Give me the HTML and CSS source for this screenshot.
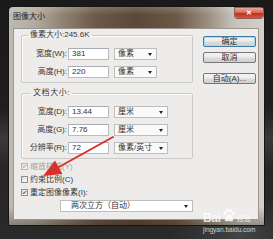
FILE: index.html
```html
<!DOCTYPE html>
<html>
<head>
<meta charset="utf-8">
<link rel="stylesheet" href="styles.css">
</head>
<body>
<div class="scene">
  <div class="window">
    <div class="titlebar">
      <span class="title">图像大小</span>
      <span class="close">✕</span>
    </div>
    <div class="client">
      <div class="main">
        <fieldset class="group">
          <legend>像素大小:245.6K</legend>
          <div class="row"><span class="lbl">宽度(W):</span><span class="input">381</span><span class="select s1">像素<i class="caret"></i></span></div>
          <div class="row"><span class="lbl">高度(H):</span><span class="input">220</span><span class="select s1">像素<i class="caret"></i></span></div>
        </fieldset>
        <fieldset class="group g2">
          <legend class="spaced">文档大小:</legend>
          <div class="row"><span class="lbl">宽度(D):</span><span class="input">13.44</span><span class="select s2">厘米<i class="caret"></i></span></div>
          <div class="row"><span class="lbl">高度(G):</span><span class="input">7.76</span><span class="select s2">厘米<i class="caret"></i></span></div>
          <div class="row"><span class="lbl">分辨率(R):</span><span class="input">72</span><span class="select s2">像素/英寸<i class="caret"></i></span></div>
        </fieldset>
        <div class="checks">
          <div class="check disabled"><span class="box on"><svg viewBox="0 0 7 7"><path d="M1.2 3.6 L2.8 5.2 L5.8 1.4"/></svg></span>缩放样式(Y)</div>
          <div class="check"><span class="box"></span>约束比例(C)</div>
          <div class="check"><span class="box on"><svg viewBox="0 0 7 7"><path d="M1.2 3.6 L2.8 5.2 L5.8 1.4"/></svg></span>重定图像像素(I):</div>
        </div>
        <span class="select wide">两次立方（自动）<i class="caret"></i></span>
      </div>
      <div class="buttons">
        <span class="btn default">确定</span>
        <span class="btn">取消</span>
        <span class="btn gap">自动(A)...</span>
      </div>
    </div>
  </div>
  <svg class="arrow" width="273" height="239" viewBox="0 0 273 239">
    <line x1="113" y1="137" x2="58" y2="167.5" stroke="#d8302c" stroke-width="2" stroke-linecap="round"/>
    <polygon points="43,176 55,160.5 62.5,174" fill="#d8302c"/>
  </svg>
  <div class="watermark">
    <div class="logo"><span class="bai">Bai</span><svg class="paw" viewBox="0 0 14 16"><ellipse cx="3" cy="6" rx="1.6" ry="2"/><ellipse cx="6" cy="3" rx="1.6" ry="2.1"/><ellipse cx="9.5" cy="3.3" rx="1.6" ry="2.1"/><ellipse cx="12" cy="6.5" rx="1.5" ry="2"/><path d="M7.5 7.5 C5 7.5 3 11 3 13 C3 15 5 15 7.5 14.5 C10 15 12 15 12 13 C12 11 10 7.5 7.5 7.5 Z"/></svg><span class="jy">经验</span></div>
    <div class="url">jingyan.baidu.com</div>
  </div>
</div>
</body>
</html>
```

FILE: styles.css
```css
html, body {
  margin: 0;
  padding: 0;
}
body {
  width: 273px;
  height: 239px;
  overflow: hidden;
  background: #1e1e1e;
  font-family: "Liberation Sans", "Noto Sans CJK SC", sans-serif;
  font-size: 8px;
  color: #363636;
}
.scene {
  position: relative;
  width: 273px;
  height: 239px;
  box-sizing: border-box;
  padding: 7px 0 0 9px;
  background:
    radial-gradient(ellipse 70px 40px at 240px 235px, #444 0%, rgba(60,60,60,0.6) 50%, rgba(40,40,40,0) 100%),
    linear-gradient(180deg, #1a1a1a 0%, #1e1e1e 45%, #3a3a3a 58%, #262626 70%, #2a2a2a 100%);
}
.window {
  width: 255px;
  height: 218px;
  box-sizing: border-box;
  padding: 0 5px 5px 4px;
  display: flex;
  flex-direction: column;
  border-radius: 4px 4px 1px 1px;
  background:
    linear-gradient(180deg, rgba(255,255,255,0.18) 0px, rgba(255,255,255,0) 8px, rgba(0,0,0,0) 200px, rgba(40,30,20,0.35) 218px),
    linear-gradient(90deg, #bfbab2 0%, #b2aba0 10%, #8e7f6e 22%, #6a5848 34%, #5a4838 50%, #6c5a48 66%, #9a8e80 78%, #c6c1b8 88%, #d3d0ca 100%);
  box-shadow: 0 0 0 1px #151515;
}
.titlebar {
  height: 21px;
  display: flex;
  justify-content: space-between;
  align-items: flex-start;
}
.title {
  margin-top: 5px;
  line-height: 10px;
  font-size: 8px;
  color: #2a241e;
}
.close {
  width: 28px;
  height: 10px;
  margin-top: 1px;
  margin-right: -4px;
  border-radius: 0 0 3px 3px;
  background: linear-gradient(180deg, #e8a89a 0%, #d66a58 45%, #c2301e 55%, #d8553e 100%);
  box-shadow: 0 0 0 1px rgba(90,30,20,0.6);
  color: #fff;
  font-size: 7px;
  font-weight: bold;
  line-height: 10px;
  text-align: center;
}
.client {
  flex: 1;
  display: flex;
  gap: 10px;
  padding: 2px 3px 0 8px;
  background: #edecea;
  box-shadow: inset 0 0 0 1px #9c968e;
}
.main {
  width: 172px;
  display: flex;
  flex-direction: column;
}
.group {
  margin: 0;
  padding: 8px 0 4px 0;
  border: 1px solid #c9c9c7;
  border-radius: 2px;
  box-shadow: inset 1px 1px 0 #fbfbfb;
  display: flex;
  flex-direction: column;
  gap: 6px;
}
.g2 {
  margin-top: 5px;
}
legend {
  margin-left: 6px;
  padding: 0 2px;
  line-height: 10px;
  font-size: 8px;
  color: #363636;
}
.spaced {
  margin-left: 9px;
  letter-spacing: 0.6px;
}
.row {
  display: flex;
  height: 12px;
  align-items: stretch;
}
.lbl {
  width: 45px;
  text-align: right;
  line-height: 12px;
}
.input {
  margin-left: 1px;
  width: 41px;
  box-sizing: border-box;
  border: 1px solid #b9bcc2;
  border-top-color: #a9acb2;
  background: #fff;
  padding-left: 3px;
  line-height: 10px;
  color: #333;
}
.select {
  position: relative;
  margin-left: 5px;
  box-sizing: border-box;
  border: 1px solid #bdbdbd;
  background: #fafafa;
  padding-left: 3px;
  line-height: 10px;
  color: #333;
}
.s1 { width: 43px; }
.s2 { width: 54px; }
.caret {
  position: absolute;
  right: 4px;
  top: 4px;
  width: 0;
  height: 0;
  border-left: 2.5px solid transparent;
  border-right: 2.5px solid transparent;
  border-top: 3px solid #222;
}
.checks {
  margin-top: 1px;
  display: flex;
  flex-direction: column;
}
.check {
  height: 13px;
  display: flex;
  align-items: center;
  gap: 2px;
  line-height: 13px;
}
.box {
  width: 7px;
  height: 7px;
  box-sizing: border-box;
  border: 1px solid #8e8f8f;
  background: linear-gradient(135deg, #dcdcdc, #fbfbfb);
  display: flex;
}
.box svg {
  width: 5px;
  height: 5px;
  fill: none;
  stroke: #333;
  stroke-width: 1.3;
}
.disabled {
  color: #a3a3a3;
}
.disabled .box {
  border-color: #b8b8b8;
}
.disabled .box svg {
  stroke: #9a9a9a;
}
.wide {
  margin-top: 1px;
  margin-left: 39px;
  width: 133px;
  height: 12px;
  padding-left: 10px;
  background: #fff;
}
.buttons {
  width: 53px;
  margin-top: 6px;
  display: flex;
  flex-direction: column;
  gap: 5px;
}
.btn {
  height: 11px;
  box-sizing: border-box;
  border: 1px solid #777;
  border-radius: 2px;
  background: linear-gradient(180deg, #f4f4f4 0%, #ebebeb 48%, #dcdcdc 52%, #d0d0d0 100%);
  text-align: center;
  line-height: 9px;
  font-size: 8px;
  color: #2e2e2e;
}
.default {
  border-color: #3d7ba8;
  box-shadow: inset 0 0 0 1px #a9dcf2;
}
.gap {
  margin-top: 5px;
}
.arrow {
  position: absolute;
  left: 0;
  top: 0;
  pointer-events: none;
}
.watermark {
  position: absolute;
  left: 203px;
  top: 205px;
  width: 56px;
  color: rgba(255,255,255,0.78);
}
.logo {
  display: flex;
  align-items: flex-end;
  height: 19px;
}
.bai {
  font-family: "Liberation Sans", sans-serif;
  font-weight: bold;
  font-size: 12px;
  line-height: 12px;
  letter-spacing: -0.3px;
}
.paw {
  width: 13px;
  height: 16px;
  margin-left: 1px;
  margin-bottom: 1px;
  fill: rgba(255,255,255,0.8);
}
.jy {
  margin-left: 2px;
  font-size: 7px;
  line-height: 9px;
  margin-bottom: 1px;
}
.url {
  margin-top: 2px;
  font-size: 6.5px;
  line-height: 7px;
  white-space: nowrap;
}
```
